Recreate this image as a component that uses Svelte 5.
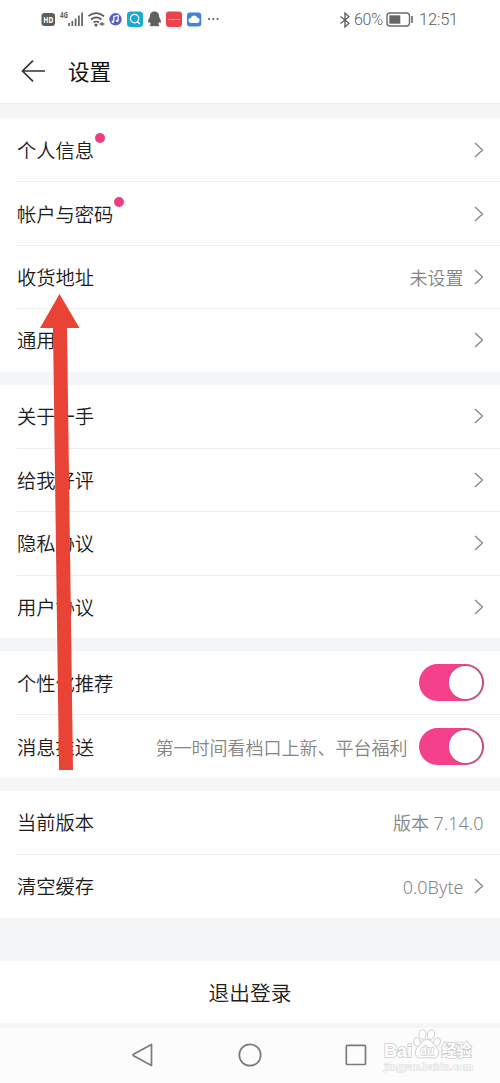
<script>
  const groups = [
    [
      { label: '个人信息', dot: true, arrow: true },
      { label: '帐户与密码', dot: true, arrow: true },
      { label: '收货地址', value: '未设置', arrow: true },
      { label: '通用', arrow: true }
    ],
    [
      { label: '关于一手', arrow: true },
      { label: '给我好评', arrow: true },
      { label: '隐私协议', arrow: true },
      { label: '用户协议', arrow: true }
    ],
    [
      { label: '个性化推荐', toggle: true },
      { label: '消息推送', value: '第一时间看档口上新、平台福利', toggle: true }
    ],
    [
      { label: '当前版本', value: '版本 7.14.0' },
      { label: '清空缓存', value: '0.0Byte', arrow: true }
    ]
  ];

  let switches = $state({ 个性化推荐: true, 消息推送: true });
</script>

<div class="screen">
  <div class="status-bar">
    <svg class="status-icons" width="184" height="20" viewBox="0 0 184 20">
      <rect x="1.5" y="3" width="13.5" height="13" rx="3" fill="#5c5c5c" />
      <text x="3.3" y="12.7" font-size="8.5" font-weight="700" fill="#fff" textLength="10" lengthAdjust="spacingAndGlyphs">HD</text>
      <text x="20" y="8" font-size="8" font-weight="700" fill="#5c5c5c" textLength="8" lengthAdjust="spacingAndGlyphs">4G</text>
      <path d="M29 16v-3M32.3 16v-5M35.6 16V8.5M38.9 16V5.5M42.1 16V2.5" stroke="#626262" stroke-width="1.7" />
      <path d="M48.5 6.2q7.5-6 15.5 0M51 9.5q5.2-4.2 10.5 0M53.5 12.5q2.8-2 5.5 0" fill="none" stroke="#5c5c5c" stroke-width="1.7" />
      <circle cx="56" cy="15" r="1.6" fill="#5c5c5c" />
      <path d="M59 14l3-2v4zM65 14l-3-2v4z" fill="#777" />
      <circle cx="75.5" cy="9.3" r="6.2" fill="#5861c6" />
      <path d="M73.8 11.7V6.4l4.4-1v5" stroke="#fff" fill="none" stroke-width="1.2" />
      <circle cx="72.9" cy="11.8" r="1.3" fill="#fff" />
      <circle cx="77.3" cy="10.7" r="1.3" fill="#fff" />
      <rect x="87" y="1.4" width="16" height="15.6" rx="3.5" fill="#18a9d8" />
      <circle cx="94.6" cy="8.6" r="4.2" fill="none" stroke="#fff" stroke-width="1.2" />
      <path d="M97.5 11.7l2.3 2.3" stroke="#fff" stroke-width="1.4" />
      <path d="M114.5 1.5c-3.4 0-4.9 2.6-4.6 5.5-1.4 2-2.2 4-1.6 5.8.4.3 1-.2 1.4-.8.2.9.6 1.4 1.2 2-1 .5-1.3 1.1-1.1 1.7 1.6.8 3.4.6 4.7 0 1.3.6 3.1.8 4.7 0 .2-.6-.1-1.2-1.1-1.7.6-.6 1-1.1 1.2-2 .4.6 1 1.1 1.4.8.6-1.8-.2-3.8-1.6-5.8.3-2.9-1.2-5.5-4.6-5.5z" fill="#606060" />
      <rect x="126" y="1.4" width="16" height="15.6" rx="3" fill="#e9434c" />
      <path d="M128 9.5h12" stroke="#f7b3b4" stroke-width="1.2" stroke-dasharray="2 .5" />
      <rect x="147" y="2.4" width="14.3" height="14" rx="3" fill="#3f82d8" />
      <path d="M151 13a2.5 2.5 0 0 1-.2-5 3.4 3.4 0 0 1 6.4-.5 2.8 2.8 0 0 1 .3 5.5z" fill="#fff" />
      <g fill="#606060">
        <circle cx="169" cy="9" r="1.1" />
        <circle cx="173.3" cy="9" r="1.1" />
        <circle cx="177.6" cy="9" r="1.1" />
      </g>
    </svg>
    <div class="status-right">
      <svg width="10" height="16" viewBox="0 0 10 16">
        <path d="M0.5 4.5L9 11.3 5 15V1l4 3.7L0.5 11.5" fill="none" stroke="#626262" stroke-width="1.4" />
      </svg>
      <span class="battery-text">60%</span>
      <svg class="battery" width="28" height="15" viewBox="0 0 28 15">
        <rect x="1" y="1" width="22.5" height="13" rx="3" fill="none" stroke="#6b6b6b" stroke-width="1.4" />
        <rect x="3.3" y="3.3" width="11" height="8.4" fill="#666" />
        <path d="M26 4v7" stroke="#6b6b6b" stroke-width="1.6" />
      </svg>
      <span class="clock">12:51</span>
    </div>
  </div>

  <header class="title-bar">
    <svg width="25" height="22" viewBox="0 0 25 22">
      <path d="M12 .7L1.5 11 12 21.3M1.5 11H24" fill="none" stroke="#333" stroke-width="1.7" />
    </svg>
    <h1>设置</h1>
  </header>

  <main>
    {#each groups as rows}
      <section class="group">
        {#each rows as row (row.label)}
          <div class="row">
            <span class="label">
              {row.label}
              {#if row.dot}<i class="dot"></i>{/if}
            </span>
            {#if row.value}
              <span class="value">{row.value}</span>
            {/if}
            {#if row.arrow}
              <svg class="arrow" width="10" height="16" viewBox="0 0 10 16">
                <path d="M1 1l7.5 7L1 15" fill="none" stroke="#858585" stroke-width="1.3" />
              </svg>
            {/if}
            {#if row.toggle}
              <button
                class="toggle"
                class:on={switches[row.label]}
                aria-label={row.label}
                onclick={() => (switches[row.label] = !switches[row.label])}
              ></button>
            {/if}
          </div>
        {/each}
      </section>
    {/each}
  </main>

  <button class="logout">退出登录</button>

  <nav class="nav-bar">
    <svg width="22" height="24" viewBox="0 0 22 24">
      <path d="M19.5 1.5v21L1.5 12.7q-1-.7 0-1.4z" fill="none" stroke="#7b7b7b" stroke-width="1.7" stroke-linejoin="round" />
    </svg>
    <svg width="24" height="24" viewBox="0 0 24 24">
      <circle cx="12" cy="12" r="10.7" fill="none" stroke="#7b7b7b" stroke-width="1.7" />
    </svg>
    <svg width="22" height="22" viewBox="0 0 22 22">
      <rect x="1.3" y="1.3" width="19.2" height="19.2" rx="1" fill="none" stroke="#7b7b7b" stroke-width="1.7" />
    </svg>
  </nav>

  <svg class="pointer" width="42" height="480" viewBox="0 0 42 480">
    <path d="M20.5 2L40.5 36H28L34 478H20L14 36H1z" fill="#e94335" />
  </svg>

  <svg class="watermark" width="96" height="48" viewBox="0 0 96 48">
    <g fill="#fff" stroke="#cfcfcf" stroke-width="1">
      <ellipse cx="34" cy="14" rx="3.3" ry="4.3" transform="rotate(-15 34 14)" />
      <ellipse cx="39.5" cy="6.5" rx="3.5" ry="4.8" />
      <ellipse cx="48" cy="6.5" rx="3.5" ry="4.8" transform="rotate(12 48 6.5)" />
      <ellipse cx="54" cy="14" rx="3.3" ry="4.3" transform="rotate(20 54 14)" />
      <path d="M44 11.500c4.500 0 6 4 9.500 8 4 4.500 2.500 11.500-4 10.500-3.500-.4-7.500-.4-11 0-6.500.5-8-6-4-10.500 3.500-4 5-8 9.500-8z" />
    </g>
    <g fill="#fff" stroke="#cbcbcb" stroke-width="1.6" paint-order="stroke" font-weight="700">
      <text x="1" y="29" font-size="19" textLength="28" lengthAdjust="spacingAndGlyphs">Bai</text>
      <text x="37" y="26.5" font-size="13" textLength="14" lengthAdjust="spacingAndGlyphs">du</text>
      <text x="58.5" y="28" font-size="15.5" textLength="30" lengthAdjust="spacingAndGlyphs">经验</text>
    </g>
    <text class="site" x="1" y="42" font-size="11" textLength="89" lengthAdjust="spacingAndGlyphs">jingyan.baidu.com</text>
  </svg>
</div>

<style>
  :global(body) {
    margin: 0;
  }

  .screen {
    position: relative;
    display: flex;
    flex-direction: column;
    box-sizing: border-box;
    width: 500px;
    height: 1083px;
    overflow: hidden;
    background: #f4f5f6;
    color: #1c1c1c;
    font-family: 'Noto Sans', 'Noto Sans CJK SC', sans-serif;
    font-weight: 350;
  }

  .status-bar {
    display: flex;
    justify-content: space-between;
    align-items: center;
    flex: none;
    height: 38px;
    padding: 0 42px 0 40px;
    background: #fefefe;
  }

  .status-icons {
    margin-top: 1px;
  }

  .status-right {
    display: flex;
    align-items: center;
    margin-top: 1px;
    color: #606060;
    font-family: Roboto, sans-serif;
    font-weight: 300;
  }

  .battery-text {
    width: 32px;
    margin-left: 4px;
    white-space: nowrap;
    font-size: 16px;
    letter-spacing: -0.3px;
  }

  .clock {
    width: 39px;
    margin-left: 5px;
    white-space: nowrap;
    font-size: 16.5px;
    letter-spacing: -0.2px;
  }

  .title-bar {
    display: flex;
    align-items: center;
    flex: none;
    box-sizing: border-box;
    height: 66px;
    padding: 0 21px;
    background: #fefefe;
    border-bottom: 1px solid #e9ebeb;
  }

  .title-bar h1 {
    margin: 3px 0 0 22px;
    color: #111;
    font-size: 21.5px;
    font-weight: 400;
    line-height: 30px;
  }

  main {
    display: flex;
    flex-direction: column;
    gap: 13px;
    padding-top: 14px;
  }

  .group {
    background: #fefefe;
  }

  .row {
    display: flex;
    align-items: center;
    box-sizing: border-box;
    height: 63.375px;
    margin-left: 17px;
    padding-right: 16.5px;
  }

  .row + .row {
    border-top: 1px solid #efefef;
  }

  .label {
    position: relative;
    padding-top: 2px;
    font-size: 19.3px;
    line-height: 28px;
  }

  .dot {
    position: absolute;
    top: -2px;
    right: -11px;
    width: 10px;
    height: 10px;
    border-radius: 50%;
    background: #ee3d83;
  }

  .value {
    margin-left: auto;
    padding-top: 2px;
    color: #858585;
    font-size: 18px;
    line-height: 28px;
    white-space: nowrap;
  }

  .arrow {
    margin-left: auto;
  }

  .value + .arrow {
    margin-left: 10px;
  }

  .toggle {
    flex: none;
    width: 64.5px;
    height: 36.5px;
    margin-left: auto;
    padding: 2px;
    border: 0;
    border-radius: 19px;
    background: #ccc;
  }

  .toggle::before {
    content: '';
    display: block;
    width: 32.5px;
    height: 32.5px;
    border-radius: 50%;
    background: #fff;
  }

  .toggle.on {
    background: #f5418c;
  }

  .toggle.on::before {
    margin-left: auto;
    box-shadow: 0.5px 0 1.5px 1px #b0577f;
  }

  .value + .toggle {
    margin-left: 11.5px;
  }

  .logout {
    flex: none;
    height: 62px;
    margin-top: 43px;
    padding: 0;
    border: 0;
    background: #fefefe;
    color: inherit;
    font-family: inherit;
    font-size: 20.7px;
    font-weight: inherit;
  }

  .nav-bar {
    display: flex;
    align-items: center;
    justify-content: space-between;
    flex: 1;
    margin-top: 5px;
    padding: 0 133px 0 132px;
    background: #fcfcfc;
  }

  .pointer {
    position: absolute;
    top: 292px;
    left: 39px;
  }

  .watermark {
    position: absolute;
    left: 383px;
    top: 1028px;
    font-family: 'Liberation Sans', 'Noto Sans CJK SC', sans-serif;
  }

  .site {
    fill: #fff;
    stroke: #dcdcdc;
    stroke-width: 1.2;
    paint-order: stroke;
    font-family: 'Liberation Serif', serif;
  }
</style>
